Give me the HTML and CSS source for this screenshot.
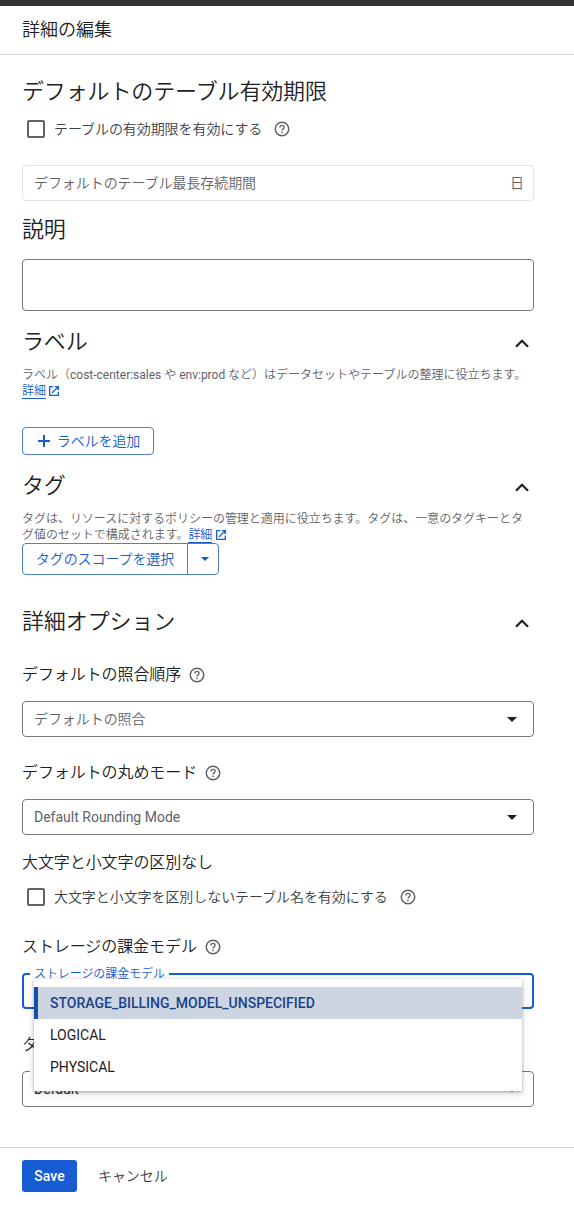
FILE: index.html
```html
<!DOCTYPE html>
<html lang="ja">
<head>
    <meta charset="UTF-8">
    <meta name="viewport" content="width=device-width, initial-scale=1.0">
    <title>詳細の編集</title>
    <link rel="stylesheet" href="styles.css">
</head>
<body>
    <!-- Shared icons -->
    <svg class="sprite" width="0" height="0">
        <symbol id="help" viewBox="0 0 16 16">
            <circle cx="8" cy="8" r="6.75" fill="none" stroke="currentColor" stroke-width="1.5"/>
            <path d="M5.9 6.5c0-1.3.9-2.1 2.1-2.1s2.1.8 2.1 1.9c0 1.5-2.1 1.6-2.1 3.3" fill="none" stroke="currentColor" stroke-width="1.4"/>
            <rect x="7.25" y="10.6" width="1.5" height="1.5" fill="currentColor"/>
        </symbol>
        <symbol id="chevron" viewBox="0 0 14 9">
            <path d="M1 7.7 7 1.8l6 5.9" fill="none" stroke="currentColor" stroke-width="2.3"/>
        </symbol>
        <symbol id="external" viewBox="0 0 10 10">
            <path d="M4.2.7H.7v8.6h8.6V5.8M5.8.7h3.5v3.5M9.1.9 3 7" fill="none" stroke="currentColor" stroke-width="1.3"/>
        </symbol>
        <symbol id="arrow" viewBox="0 0 10 5">
            <path d="M0 0h10L5 5z" fill="currentColor"/>
        </symbol>
    </svg>

    <header class="header">
        <h1>詳細の編集</h1>
    </header>

    <main class="form">
        <h2 class="heading">デフォルトのテーブル有効期限</h2>
        <label class="check-row">
            <span class="checkbox"></span>
            <span class="text">テーブルの有効期限を有効にする</span>
            <svg class="help"><use href="#help"/></svg>
        </label>
        <div class="field disabled">
            <span class="text">デフォルトのテーブル最長存続期間</span>
            <span class="text">日</span>
        </div>

        <h2 class="heading description-heading">説明</h2>
        <div class="textarea"></div>

        <h2 class="heading labels-heading">ラベル <svg class="chevron"><use href="#chevron"/></svg></h2>
        <p class="hint">ラベル（<span class="latin">cost-center:sales</span> や <span class="latin">env:prod</span> など）はデータセットやテーブルの整理に役立ちます。<br><a href="#">詳細</a><svg class="external"><use href="#external"/></svg></p>
        <button class="add-button">
            <svg class="plus" viewBox="0 0 12 12"><path d="M6 0v12M0 6h12" stroke="currentColor" stroke-width="2"/></svg>
            <span class="text">ラベルを追加</span>
        </button>

        <h2 class="heading tags-heading">タグ <svg class="chevron"><use href="#chevron"/></svg></h2>
        <p class="hint tags-hint">タグは、リソースに対するポリシーの管理と適用に役立ちます。タグは、一意のタグキーとタ<br>グ値のセットで構成されます。<a href="#">詳細</a><svg class="external"><use href="#external"/></svg></p>
        <div class="split-button">
            <button class="split-main"><span class="text">タグのスコープを選択</span></button>
            <button class="split-arrow"><svg class="arrow small"><use href="#arrow"/></svg></button>
        </div>

        <h2 class="heading advanced-heading">詳細オプション <svg class="chevron"><use href="#chevron"/></svg></h2>

        <h3 class="label first">デフォルトの照合順序 <svg class="help"><use href="#help"/></svg></h3>
        <div class="field">
            <span class="text">デフォルトの照合</span>
            <svg class="arrow"><use href="#arrow"/></svg>
        </div>

        <h3 class="label">デフォルトの丸めモード <svg class="help"><use href="#help"/></svg></h3>
        <div class="field">
            <span class="latin">Default Rounding Mode</span>
            <svg class="arrow"><use href="#arrow"/></svg>
        </div>

        <h3 class="label case-label">大文字と小文字の区別なし</h3>
        <label class="check-row case-row">
            <span class="checkbox"></span>
            <span class="text">大文字と小文字を区別しないテーブル名を有効にする</span>
            <svg class="help"><use href="#help"/></svg>
        </label>

        <h3 class="label billing-label">ストレージの課金モデル <svg class="help"><use href="#help"/></svg></h3>
        <div class="field focused">
            <span class="floating">ストレージの課金モデル</span>
            <ul class="menu">
                <li class="selected">STORAGE_BILLING_MODEL_UNSPECIFIED</li>
                <li>LOGICAL</li>
                <li>PHYSICAL</li>
            </ul>
        </div>

        <h3 class="label">タ</h3>
        <div class="field filled">
            <span class="floating notch"></span>
            <span class="latin">Default</span>
            <svg class="arrow"><use href="#arrow"/></svg>
        </div>
    </main>

    <footer class="footer">
        <button class="save">Save</button>
        <button class="cancel"><span class="text">キャンセル</span></button>
    </footer>
</body>
</html>
```
FILE: styles.css
```css
* {
    box-sizing: border-box;
}
body {
    margin: 0;
    border-top: 6px solid #333333;
    background: #fff;
    color: #202124;
    font-family: Roboto, "Noto Sans CJK JP", sans-serif;
    font-size: 14px;
    font-weight: 350;
}
h1, h2, h3, p, ul {
    margin: 0;
    padding: 0;
    font-weight: 350;
}
button {
    font: inherit;
    padding: 0;
    background: none;
    border: 0;
    white-space: nowrap;
}
svg {
    flex-shrink: 0;
}
.sprite {
    display: block;
}
.latin {
    font-weight: 400;
}
/* Japanese glyphs sit low in the line box */
.text {
    padding-bottom: 2px;
    letter-spacing: -0.07px;
}
.header {
    height: 49px;
    padding-left: 22px;
    border-bottom: 1px solid #d5d7d9;
}
.header h1 {
    font-size: 18px;
    line-height: 48px;
}
.form {
    width: 512px;
    margin: 21px 0 0 22px;
}
.heading {
    display: flex;
    align-items: center;
    justify-content: space-between;
    height: 32px;
    padding: 0 5px 6px 0;
    font-size: 22px;
    letter-spacing: -0.13px;
    white-space: nowrap;
}
.description-heading {
    margin-top: 13px;
}
.labels-heading, .tags-heading {
    margin-top: 15px;
}
.advanced-heading {
    margin-top: 31px;
}
.chevron {
    width: 14px;
    height: 9px;
    margin-top: 8px;
}
.check-row {
    display: flex;
    align-items: center;
    height: 32px;
    margin-top: 5px;
    padding-left: 5px;
    color: #3c4043;
    white-space: nowrap;
}
.checkbox {
    width: 18px;
    height: 18px;
    margin-right: 9px;
    border: 2px solid #5f6368;
    border-radius: 2px;
}
.help {
    width: 16px;
    height: 16px;
    color: #5f6368;
}
.check-row .help {
    margin-left: 12px;
}
.field {
    position: relative;
    display: flex;
    align-items: center;
    justify-content: space-between;
    height: 36px;
    margin-top: 15px;
    padding: 0 16px 0 11px;
    border: 1px solid #74797f;
    border-radius: 4px;
    color: #5f6368;
    white-space: nowrap;
}
.field.disabled {
    margin-top: 20px;
    padding-right: 9px;
    border-color: #e3e4e5;
}
.arrow {
    width: 10px;
    height: 5px;
    color: #202124;
}
.arrow.small {
    width: 8px;
    height: 4px;
    color: #185abc;
}
.textarea {
    height: 52px;
    margin-top: 13px;
    border: 1px solid #74797f;
    border-radius: 4px;
}
.hint {
    margin-top: 9px;
    color: #5f6368;
    font-size: 12px;
    line-height: 16px;
    white-space: nowrap;
}
.tags-hint {
    height: 32px;
    letter-spacing: -0.03px;
}
.hint a {
    color: #175cd3;
    text-decoration: none;
    border-bottom: 1px solid #175cd3;
}
.external {
    width: 10px;
    height: 10px;
    margin-left: 3px;
    vertical-align: -1px;
    color: #175cd3;
}
.tags-hint .external {
    margin-left: 4px;
}
.add-button {
    display: flex;
    align-items: center;
    justify-content: center;
    gap: 7px;
    width: 132px;
    height: 28px;
    margin-top: 28px;
    padding-left: 2px;
    border: 1px solid #4d7fce;
    border-radius: 4px;
    color: #175cd3;
}
.plus {
    width: 12px;
    height: 12px;
}
.split-button {
    display: flex;
    width: 197px;
    height: 32px;
    border: 1px solid #4d7fce;
    border-radius: 4px;
}
.split-main {
    display: flex;
    align-items: center;
    justify-content: center;
    width: 165px;
    border-right: 1px solid #4d7fce;
    color: #175cd3;
}
.split-arrow {
    display: flex;
    flex: 1;
    align-items: center;
    justify-content: center;
    padding-left: 3px;
}
.label {
    display: flex;
    align-items: center;
    gap: 8px;
    height: 24px;
    margin-top: 23px;
    padding-bottom: 2px;
    font-size: 16px;
    letter-spacing: -0.08px;
    white-space: nowrap;
}
.label.first {
    margin-top: 24px;
}
.label .help {
    margin-top: 4px;
}
.case-label {
    margin-top: 15px;
}
.case-row {
    margin-top: 7px;
}
.billing-label {
    margin-top: 21px;
}
.field.focused {
    border: 2px solid #175cd3;
}
.floating {
    position: absolute;
    top: -9px;
    left: 6px;
    padding: 0 4px;
    background: #fff;
    color: #175cd3;
    font-size: 12px;
    line-height: 16px;
    letter-spacing: -0.08px;
}
.notch {
    left: 7px;
    width: 120px;
    height: 16px;
}
.filled {
    color: #202124;
}
/* Open dropdown, covers the fields below */
.menu {
    position: absolute;
    z-index: 1;
    top: 4px;
    left: 10px;
    width: 488px;
    height: 112px;
    padding-top: 8px;
    list-style: none;
    background: #fff;
    box-shadow: 0 1px 3px rgba(60, 64, 67, 0.4), 0 3px 8px rgba(60, 64, 67, 0.15);
    color: #202124;
    font-weight: 400;
}
.menu li {
    height: 32px;
    padding-left: 16px;
    line-height: 32px;
}
.menu .selected {
    padding-left: 12px;
    border-left: 4px solid #174ea6;
    background: #ced5e2;
    color: #19428a;
    font-weight: 500;
}
.footer {
    display: flex;
    gap: 21px;
    height: 69px;
    margin-top: 40px;
    padding: 12px 22px;
    border-top: 1px solid #d5d7d9;
}
.save {
    width: 55px;
    height: 32px;
    border-radius: 3px;
    background: #175cd3;
    color: #fff;
    font-weight: 500;
}
.cancel {
    display: flex;
    align-items: center;
    height: 32px;
    color: #3c4043;
}
```
